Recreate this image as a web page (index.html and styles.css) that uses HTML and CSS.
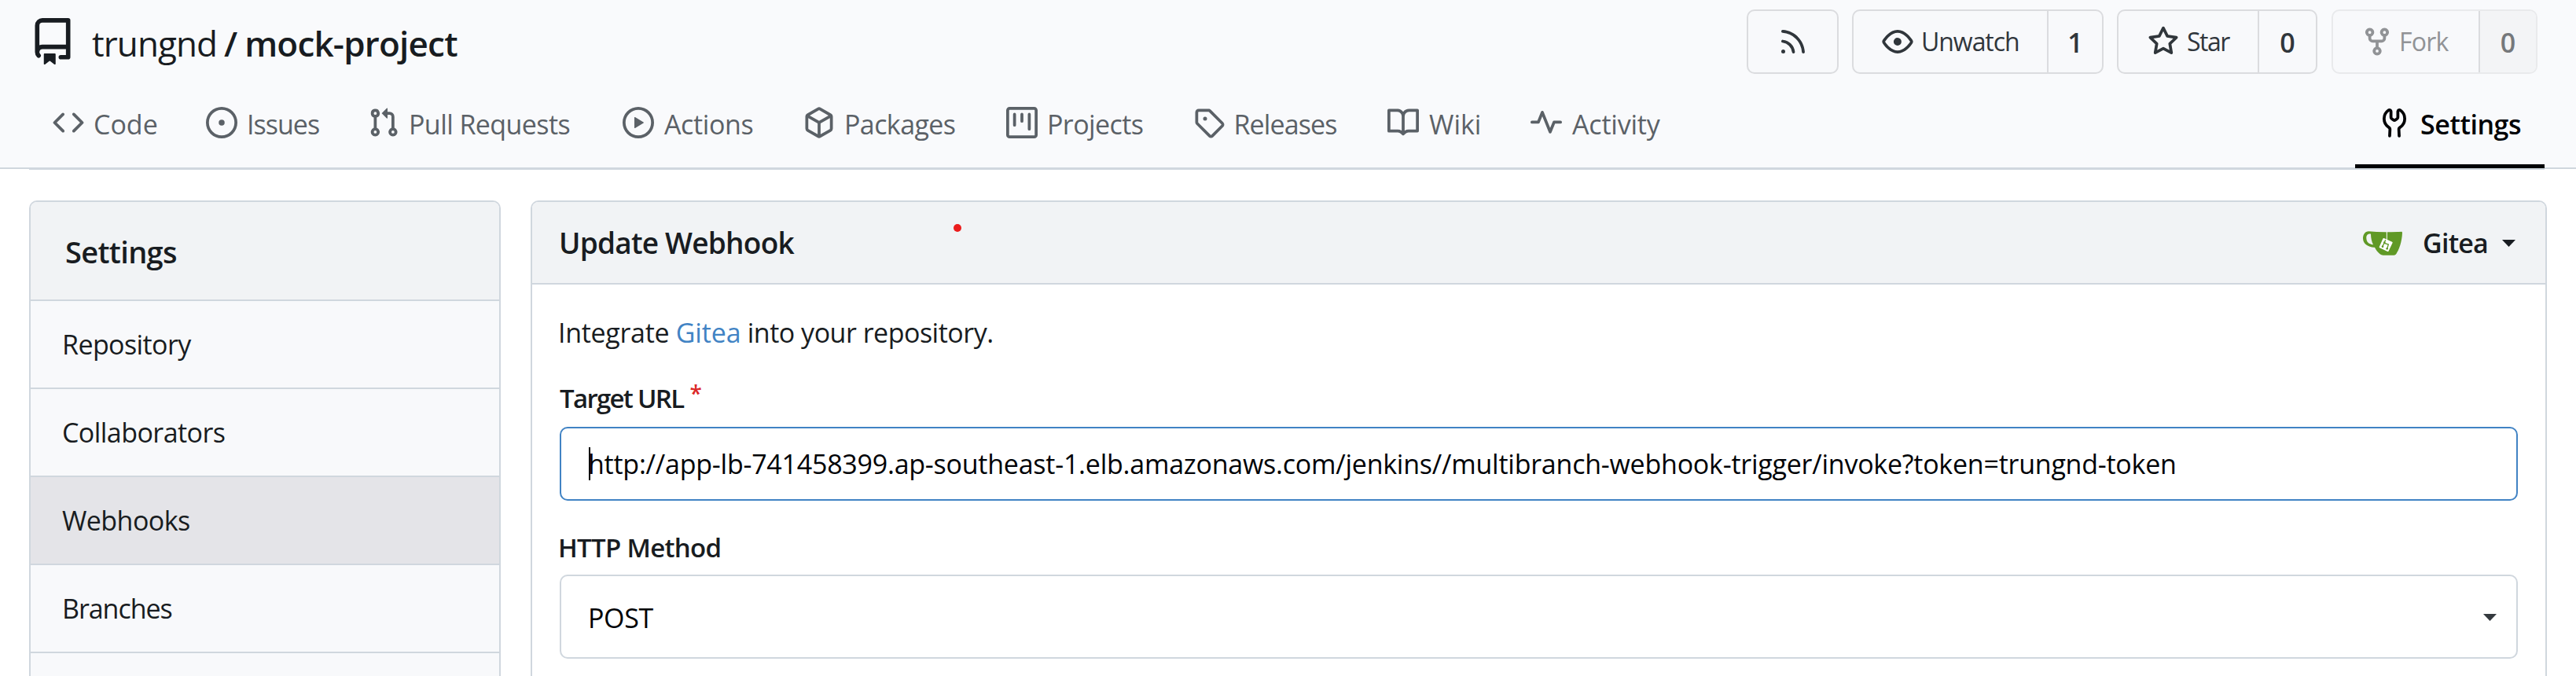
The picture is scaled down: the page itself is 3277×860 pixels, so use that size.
FILE: index.html
```
<!DOCTYPE html>
<html lang="en">
<head>
<meta charset="utf-8">
<title>trungnd/mock-project - Update Webhook</title>
<link rel="stylesheet" href="styles.css">
</head>
<body>
<header class="repo-header">
  <div class="repo-top">
    <div class="repo-title">
      <svg class="repo-icon" viewBox="0 0 16 16"><path d="M2 2.5A2.5 2.5 0 0 1 4.5 0h8.75a.75.75 0 0 1 .75.75v12.5a.75.75 0 0 1-.75.75h-2.5a.75.75 0 0 1 0-1.5h1.75v-2h-8a1 1 0 0 0-.714 1.7.75.75 0 1 1-1.072 1.05A2.495 2.495 0 0 1 2 11.500Zm10.500-1h-8a1 1 0 0 0-1 1v6.708A2.486 2.486 0 0 1 4.500 9h8ZM5 12.250a.25.25 0 0 1 .25-.25h3.500a.25.25 0 0 1 .25.25v3.250a.25.25 0 0 1-.4.2l-1.450-1.087a.249.249 0 0 0-.3 0L5.400 15.700a.25.25 0 0 1-.4-.2Z"/></svg>
      <a class="owner">trungnd</a><span class="slash">/</span><a class="repo-name">mock-project</a>
    </div>
    <div class="repo-buttons">
      <a class="button rss"><svg class="icon" viewBox="0 0 16 16"><path d="M2.002 2.725a.75.75 0 0 1 .797-.699C8.790 2.420 13.580 7.210 13.974 13.201a.75.75 0 0 1-1.497.098 10.502 10.502 0 0 0-9.776-9.776.747.747 0 0 1-.7-.798ZM2.840 7.050h-.002a7.002 7.002 0 0 1 6.113 6.111.75.75 0 0 1-1.490.178 5.503 5.503 0 0 0-4.800-4.800.75.75 0 0 1 .179-1.489ZM2 13a1 1 0 1 1 2 0 1 1 0 0 1-2 0Z"/></svg></a>
      <div class="button watch">
        <a class="action"><svg class="icon" viewBox="0 0 16 16"><path d="M8 2c1.981 0 3.671.992 4.933 2.078 1.270 1.091 2.187 2.345 2.637 3.023a1.620 1.620 0 0 1 0 1.798c-.45.678-1.367 1.932-2.637 3.023C11.670 13.008 9.981 14 8 14c-1.981 0-3.671-.992-4.933-2.078C1.797 10.830.88 9.576.43 8.898a1.620 1.620 0 0 1 0-1.798c.45-.677 1.367-1.931 2.637-3.022C4.330 2.992 6.019 2 8 2ZM1.679 7.932a.12.12 0 0 0 0 .136c.411.622 1.241 1.750 2.366 2.717C5.176 11.758 6.527 12.500 8 12.500c1.473 0 2.825-.742 3.955-1.715 1.124-.967 1.954-2.096 2.366-2.717a.12.12 0 0 0 0-.136c-.412-.621-1.242-1.750-2.366-2.717C10.824 4.242 9.473 3.500 8 3.500c-1.473 0-2.825.742-3.955 1.715-1.124.967-1.954 2.096-2.366 2.717ZM8 10a2 2 0 1 1-.001-3.999A2 2 0 0 1 8 10Z"/></svg><span>Unwatch</span></a>
        <a class="count">1</a>
      </div>
      <div class="button star">
        <a class="action"><svg class="icon" viewBox="0 0 16 16"><path d="M8 .25a.75.75 0 0 1 .673.418l1.882 3.815 4.210.612a.75.75 0 0 1 .416 1.279l-3.046 2.970.719 4.192a.751.751 0 0 1-1.088.791L8 12.347l-3.766 1.980a.75.75 0 0 1-1.088-.79l.72-4.194L.818 6.374a.75.75 0 0 1 .416-1.280l4.210-.611L7.327.668A.75.75 0 0 1 8 .25Zm0 2.445L6.615 5.500a.75.75 0 0 1-.564.410l-3.097.450 2.240 2.184a.75.75 0 0 1 .216.664l-.528 3.084 2.769-1.456a.75.75 0 0 1 .698 0l2.770 1.456-.530-3.084a.75.75 0 0 1 .216-.664l2.240-2.183-3.096-.450a.75.75 0 0 1-.564-.410L8 2.694Z"/></svg><span>Star</span></a>
        <a class="count">0</a>
      </div>
      <div class="button fork">
        <a class="action"><svg class="icon" viewBox="0 0 16 16"><path d="M5 5.372v.878c0 .414.336.75.75.75h4.500a.75.75 0 0 0 .75-.75v-.878a2.250 2.250 0 1 1 1.500 0v.878a2.250 2.250 0 0 1-2.250 2.250h-1.500v2.128a2.251 2.251 0 1 1-1.500 0V8.500h-1.500A2.250 2.250 0 0 1 3.500 6.250v-.878a2.250 2.250 0 1 1 1.500 0ZM5 3.250a.75.75 0 1 0-1.500 0 .75.75 0 0 0 1.500 0Zm6.750.75a.75.75 0 1 0 0-1.500.75.75 0 0 0 0 1.500Zm-3 8.750a.75.75 0 1 0-1.500 0 .75.75 0 0 0 1.500 0Z"/></svg><span>Fork</span></a>
        <a class="count">0</a>
      </div>
    </div>
  </div>
  <nav class="repo-nav">
    <a class="tab code"><svg class="icon" viewBox="0 0 16 16"><path d="m11.280 3.220 4.250 4.250a.75.75 0 0 1 0 1.060l-4.250 4.250a.749.749 0 0 1-1.275-.326.749.749 0 0 1 .215-.734L13.940 8l-3.720-3.720a.749.749 0 0 1 .326-1.275.749.749 0 0 1 .734.215Zm-6.560 0a.751.751 0 0 1 1.042.018.751.751 0 0 1 .018 1.042L2.060 8l3.720 3.720a.749.749 0 0 1-.326 1.275.749.749 0 0 1-.734-.215L.47 8.530a.75.75 0 0 1 0-1.060Z"/></svg><span>Code</span></a>
    <a class="tab issues"><svg class="icon" viewBox="0 0 16 16"><path d="M8 9.500a1.500 1.500 0 1 0 0-3 1.500 1.500 0 0 0 0 3Z"/><path d="M8 0a8 8 0 1 1 0 16A8 8 0 0 1 8 0ZM1.500 8a6.500 6.500 0 1 0 13 0 6.500 6.500 0 0 0-13 0Z"/></svg><span>Issues</span></a>
    <a class="tab pulls"><svg class="icon" viewBox="0 0 16 16"><path d="M1.500 3.250a2.250 2.250 0 1 1 3 2.122v5.256a2.251 2.251 0 1 1-1.500 0V5.372A2.250 2.250 0 0 1 1.500 3.250Zm5.677-.177L9.573.677A.25.25 0 0 1 10 .854V2.500h1A2.500 2.500 0 0 1 13.500 5v5.628a2.251 2.251 0 1 1-1.500 0V5a1 1 0 0 0-1-1h-1v1.646a.25.25 0 0 1-.427.177L7.177 3.427a.25.25 0 0 1 0-.354ZM3.750 2.500a.75.75 0 1 0 0 1.500.75.75 0 0 0 0-1.500Zm0 9.500a.75.75 0 1 0 0 1.500.75.75 0 0 0 0-1.500Zm8.250.75a.75.75 0 1 0 1.500 0 .75.75 0 0 0-1.500 0Z"/></svg><span>Pull Requests</span></a>
    <a class="tab actions"><svg class="icon" viewBox="0 0 16 16"><path d="M8 0a8 8 0 1 1 0 16A8 8 0 0 1 8 0ZM1.500 8a6.500 6.500 0 1 0 13 0 6.500 6.500 0 0 0-13 0Zm4.879-2.773 4.264 2.559a.25.25 0 0 1 0 .428l-4.264 2.559A.25.25 0 0 1 6 10.559V5.442a.25.25 0 0 1 .379-.215Z"/></svg><span>Actions</span></a>
    <a class="tab packages"><svg class="icon" viewBox="0 0 16 16"><path d="m8.878.392 5.250 3.045c.54.314.872.890.872 1.514v6.098a1.750 1.750 0 0 1-.872 1.514l-5.250 3.045a1.750 1.750 0 0 1-1.756 0l-5.250-3.045A1.750 1.750 0 0 1 1 11.049V4.951c0-.624.332-1.201.872-1.514L7.122.392a1.750 1.750 0 0 1 1.756 0ZM7.875 1.690l-4.630 2.685L8 7.133l4.755-2.758-4.630-2.685a.248.248 0 0 0-.25 0ZM2.500 5.677v5.372c0 .090.047.171.125.216l4.625 2.683V8.432Zm6.250 8.271 4.625-2.683a.25.25 0 0 0 .125-.216V5.677L8.750 8.432Z"/></svg><span>Packages</span></a>
    <a class="tab projects"><svg class="icon" viewBox="0 0 16 16"><path d="M1.750 0h12.500C15.216 0 16 .784 16 1.750v12.500A1.750 1.750 0 0 1 14.250 16H1.750A1.750 1.750 0 0 1 0 14.250V1.750C0 .784.784 0 1.750 0ZM1.500 1.750v12.500c0 .138.112.25.25.25h12.500a.25.25 0 0 0 .25-.25V1.750a.25.25 0 0 0-.25-.25H1.750a.25.25 0 0 0-.25.25ZM11.750 3a.75.75 0 0 1 .75.75v7.500a.75.75 0 0 1-1.500 0v-7.500a.75.75 0 0 1 .75-.75Zm-8.250.75a.75.75 0 0 1 1.500 0v5.500a.75.75 0 0 1-1.500 0ZM8 3a.75.75 0 0 1 .75.75v3.500a.75.75 0 0 1-1.500 0v-3.500A.75.75 0 0 1 8 3Z"/></svg><span>Projects</span></a>
    <a class="tab releases"><svg class="icon" viewBox="0 0 16 16"><path d="M1 7.775V2.750C1 1.784 1.784 1 2.750 1h5.025c.464 0 .910.184 1.238.513l6.250 6.250a1.750 1.750 0 0 1 0 2.474l-5.026 5.026a1.750 1.750 0 0 1-2.474 0l-6.250-6.250A1.752 1.752 0 0 1 1 7.775Zm1.500 0c0 .066.026.130.073.177l6.250 6.250a.25.25 0 0 0 .354 0l5.025-5.025a.25.25 0 0 0 0-.354l-6.250-6.250a.25.25 0 0 0-.177-.073H2.750a.25.25 0 0 0-.25.25ZM6 5a1 1 0 1 1 0 2 1 1 0 0 1 0-2Z"/></svg><span>Releases</span></a>
    <a class="tab wiki"><svg class="icon" viewBox="0 0 16 16"><path d="M0 1.750A.75.75 0 0 1 .75 1h4.253c1.227 0 2.317.590 3 1.501A3.743 3.743 0 0 1 11.006 1h4.245a.75.75 0 0 1 .75.75v10.500a.75.75 0 0 1-.75.75h-4.507a2.250 2.250 0 0 0-1.591.659l-.622.621a.75.75 0 0 1-1.060 0l-.622-.621A2.250 2.250 0 0 0 5.258 13H.75a.75.75 0 0 1-.75-.75Zm7.251 10.324.004-5.073-.002-2.253A2.250 2.250 0 0 0 5.003 2.500H1.500v9h3.757a3.750 3.750 0 0 1 1.994.574ZM8.755 4.750l-.004 7.322a3.752 3.752 0 0 1 1.992-.572H14.500v-9h-3.495a2.250 2.250 0 0 0-2.250 2.250Z"/></svg><span>Wiki</span></a>
    <a class="tab activity"><svg class="icon" viewBox="0 0 16 16"><path d="M6 2c.306 0 .582.187.696.471L10 10.731l1.304-3.260A.751.751 0 0 1 12 7h3.250a.75.75 0 0 1 0 1.500h-2.742l-1.812 4.528a.751.751 0 0 1-1.392 0L6 4.770 4.696 8.030A.75.75 0 0 1 4 8.500H.75a.75.75 0 0 1 0-1.500h2.742l1.812-4.529A.751.751 0 0 1 6 2Z"/></svg><span>Activity</span></a>
    <a class="tab active"><svg class="icon" viewBox="0 0 16 16"><path d="M5.433 2.304A4.492 4.492 0 0 0 3.500 6c0 1.598.832 3.002 2.090 3.802.518.328.929.923.902 1.640v.008l-.164 3.337a.75.75 0 1 1-1.498-.073l.163-3.330c.002-.085-.050-.216-.207-.316A5.996 5.996 0 0 1 2 6a5.993 5.993 0 0 1 2.567-4.920 1.482 1.482 0 0 1 1.673-.040c.462.296.760.827.760 1.423v2.820c0 .082.041.160.110.206l.750.510a.25.25 0 0 0 .280 0l.750-.510A.249.249 0 0 0 9 5.282V2.463c0-.596.298-1.127.760-1.423a1.482 1.482 0 0 1 1.673.040A5.993 5.993 0 0 1 14 6a5.996 5.996 0 0 1-2.786 5.068c-.157.100-.209.230-.207.315l.163 3.330a.752.752 0 0 1-1.094.714.75.75 0 0 1-.404-.640l-.164-3.345c-.027-.717.384-1.312.902-1.640A4.495 4.495 0 0 0 12.500 6a4.492 4.492 0 0 0-1.933-3.696c-.024.017-.067.067-.067.160v2.818a1.750 1.750 0 0 1-.767 1.448l-.750.510a1.750 1.750 0 0 1-1.966 0l-.750-.510A1.750 1.750 0 0 1 5.500 5.282V2.463c0-.092-.043-.142-.067-.159Z"/></svg><span>Settings</span></a>
  </nav>
</header>
<main class="content">
  <aside class="sidebar">
    <div class="sidebar-header">Settings</div>
    <a class="side-item repository">Repository</a>
    <a class="side-item collaborators">Collaborators</a>
    <a class="side-item webhooks selected">Webhooks</a>
    <a class="side-item branches">Branches</a>
    <div class="side-end"></div>
  </aside>
  <section class="panel">
    <div class="panel-header">
      <h4>Update Webhook</h4>
      <div class="hook-type">
        <svg class="logo" viewBox="78 75 150 93">
          <path fill="#609926" fill-rule="evenodd" d="M100 76Q150 81 226 77Q228 77 228 82C227 115 215 150 203 164Q200 167 195 167H155Q148 167 143 163C134 155 127 146 123 137C100 138 78 125 78 103C78 88 86 76 100 76ZM108 86C95 84 90 93 91 103C92 117 100 125 117 127C111 115 108 100 108 86Z"/>
          <path fill="none" stroke="#fff" stroke-width="3" d="M169 78V108"/>
          <path fill="#fff" stroke="#fff" stroke-width="6" stroke-linejoin="round" d="M157 105L188 119L173 150L143 136Z"/>
          <path fill="none" stroke="#609926" stroke-width="4" d="M164 109L152 136M160 121L175 126L170 143"/>
          <g fill="#609926"><circle cx="160" cy="119" r="4"/><circle cx="153" cy="134" r="4"/><circle cx="170" cy="142" r="4"/></g>
        </svg>
        <span class="hook-name">Gitea</span>
        <svg class="caret" viewBox="0 0 17 9"><path d="M0 0H17L8.500 9Z"/></svg>
      </div>
    </div>
    <div class="panel-body">
      <p class="intro"><span class="intro-a">Integrate</span> <a class="link">Gitea</a> into your repository.</p>
      <label class="label url-label">Target URL<span class="required">*</span></label>
      <div class="input"><div class="value">http://app-lb-741458399.ap-southeast-1.elb.amazonaws.com/jenkins//multibranch-webhook-trigger/invoke?token=trungnd-token</div></div>
      <label class="label method-label">HTTP Method</label>
      <div class="select"><span>POST</span><svg class="caret" viewBox="0 0 17 9"><path d="M0 0H17L8.500 9Z"/></svg></div>
    </div>
  </section>
</main>
<div class="pointer-dot"></div>
</body>
</html>
```
FILE: styles.css
```
* { box-sizing: border-box; }
body {
  margin: 0;
  height: 860px;
  overflow: hidden;
  position: relative;
  background: #fff;
  color: #181c21;
  font: 34px/48px "Open Sans", "Noto Sans", sans-serif;
}
svg { display: block; flex: none; fill: currentColor; }
.icon { width: 40px; height: 40px; }

/* Repository header */
.repo-header {
  height: 215px;
  background: #f9fafc;
  border-bottom: 2px solid #d0d7de;
  padding: 0 40px 0 37px;
}
.repo-top {
  height: 106px;
  display: flex;
  justify-content: space-between;
  align-items: center;
  padding-right: 9px;
}
.repo-title { display: flex; align-items: center; font-size: 44px; padding-top: 3px; }
.repo-icon { width: 60px; height: 60px; margin: 0 20px 4px 0; }
.owner { letter-spacing: -0.92px; }
.slash { margin: 0 9px 0 9px; font-weight: 600; }
.repo-name { font-weight: 600; letter-spacing: -0.8px; }

.repo-buttons { display: flex; gap: 17px; }
.button {
  display: flex;
  height: 82px;
  border: 2px solid #dbdcdf;
  border-radius: 10px;
  background: #f8f9fb;
  color: #30363b;
  overflow: hidden;
}
.rss { width: 117px; align-items: center; justify-content: center; }
.action { display: flex; align-items: center; font-size: 32px; padding-left: 36px; gap: 10px; }
.action span { padding-bottom: 1px; }
.count {
  flex: 1;
  display: flex;
  align-items: center;
  justify-content: center;
  padding-top: 2px;
  border-left: 2px solid #dbdcdf;
  font-weight: 600;
}
.watch { width: 320px; }
.watch .action { width: 246px; letter-spacing: -1.04px; }
.star { width: 255px; }
.star .action { width: 177px; letter-spacing: -1.48px; padding-left: 37px; }
.fork { width: 262px; margin-left: 1px; border-color: #e9eaec; color: #75787b; }
.fork .action { width: 185px; letter-spacing: -0.78px; gap: 8px; color: #919396; }
.fork .count { background: #f3f4f6; }

.repo-nav {
  height: 110px;
  display: grid;
  grid-template-columns: 195px 206px 324px 230px 258px 237.5px 247.5px 182px 180px 1fr;
  padding-left: 30px;
  border-bottom: 2px solid #d0d7de;
  color: #5b6167;
}
.tab { display: flex; align-items: center; gap: 12px; height: 108px; padding-bottom: 8px; }
.tab span { padding-top: 4px; white-space: nowrap; }
.issues { letter-spacing: -0.97px; }
.pulls { letter-spacing: -0.58px; }
.actions { letter-spacing: -0.4px; gap: 13px; }
.packages { letter-spacing: -0.59px; }
.projects { letter-spacing: -0.6px; }
.releases { letter-spacing: -0.9px; }
.wiki { gap: 13px; }
.activity { letter-spacing: -0.2px; gap: 13px; }
.active {
  justify-self: end;
  width: 241px;
  padding: 0 0 3px 30px;
  gap: 13px;
  border-bottom: 5px solid #000206;
  color: #000206;
  font-weight: 600;
  letter-spacing: -0.44px;
}

/* Settings area */
.content {
  display: flex;
  gap: 38px;
  height: 645px;
  padding: 40px 37px 0;
}
.sidebar {
  width: 600px;
  flex: none;
  border: 2px solid #d0d7de;
  border-bottom: 0;
  border-radius: 10px 10px 0 0;
  background: #f8f9fb;
}
.sidebar-header {
  height: 124px;
  padding: 3px 0 0 44px;
  border-radius: 8px 8px 0 0;
  background: #f1f3f5;
  font-size: 38px;
  line-height: 121px;
  font-weight: 600;
  letter-spacing: -0.66px;
}
.side-item {
  display: block;
  height: 112px;
  padding-left: 40px;
  border-top: 2px solid #d0d7de;
  line-height: 111px;
}
.side-end { border-top: 2px solid #d0d7de; }
.selected { background: #e4e4e8; }
.repository { letter-spacing: -0.6px; }
.collaborators { letter-spacing: -0.55px; }
.webhooks { letter-spacing: -0.56px; }
.branches { letter-spacing: -1.05px; }

.panel {
  flex: 1;
  border: 2px solid #d0d7de;
  border-bottom: 0;
  border-radius: 10px 10px 0 0;
}
.panel-header {
  height: 105px;
  display: flex;
  align-items: center;
  justify-content: space-between;
  padding: 1px 38px 0 34px;
  border-radius: 8px 8px 0 0;
  background: #f1f3f5;
  border-bottom: 2px solid #d0d7de;
}
.panel-header h4 { margin: 0; font-size: 37px; font-weight: 600; letter-spacing: -0.78px; }
.hook-type { display: flex; align-items: center; }
.logo { width: 50px; height: 31px; }
.hook-name { font-weight: 600; letter-spacing: -0.8px; margin: 0 18px 0 26px; }
.caret { width: 17px; height: 9px; }

.panel-body { padding: 37px 35px 0; }
.intro { margin: 0 0 0 -2px; letter-spacing: -0.5px; }
.intro-a { letter-spacing: -0.3px; }
.link { color: #4183c4; letter-spacing: -0.13px; }
.label { display: block; font-weight: 600; font-size: 33px; }
.url-label { margin-top: 36px; letter-spacing: -1.7px; }
.required { display: inline-block; color: #db2828; margin-left: 8px; font-size: 28px; line-height: 20px; transform: translateY(-8px); }
.input {
  margin-top: 12px;
  height: 94px;
  border: 2px solid #4183c4;
  border-radius: 10px;
  padding: 20px 34px;
  color: #000206;
}
.value {
  position: relative;
  height: 50px;
  line-height: 50px;
  white-space: nowrap;
  letter-spacing: -0.24px;
}
.value::before {
  content: "";
  position: absolute;
  left: 1px;
  top: 4px;
  width: 2px;
  height: 42px;
  background: #000;
}
.method-label { margin: 36px 0 0 -2px; letter-spacing: -0.7px; }
.select {
  margin-top: 10px;
  height: 107px;
  display: flex;
  align-items: center;
  justify-content: space-between;
  border: 2px solid #d0d7de;
  border-radius: 10px;
  padding: 2px 25px 0 34px;
  color: #000206;
  letter-spacing: -0.35px;
}
.select .caret { color: #34393e; }

.pointer-dot {
  position: absolute;
  left: 1213px;
  top: 285px;
  width: 10px;
  height: 10px;
  border-radius: 50%;
  background: #eb1c1c;
}
```
